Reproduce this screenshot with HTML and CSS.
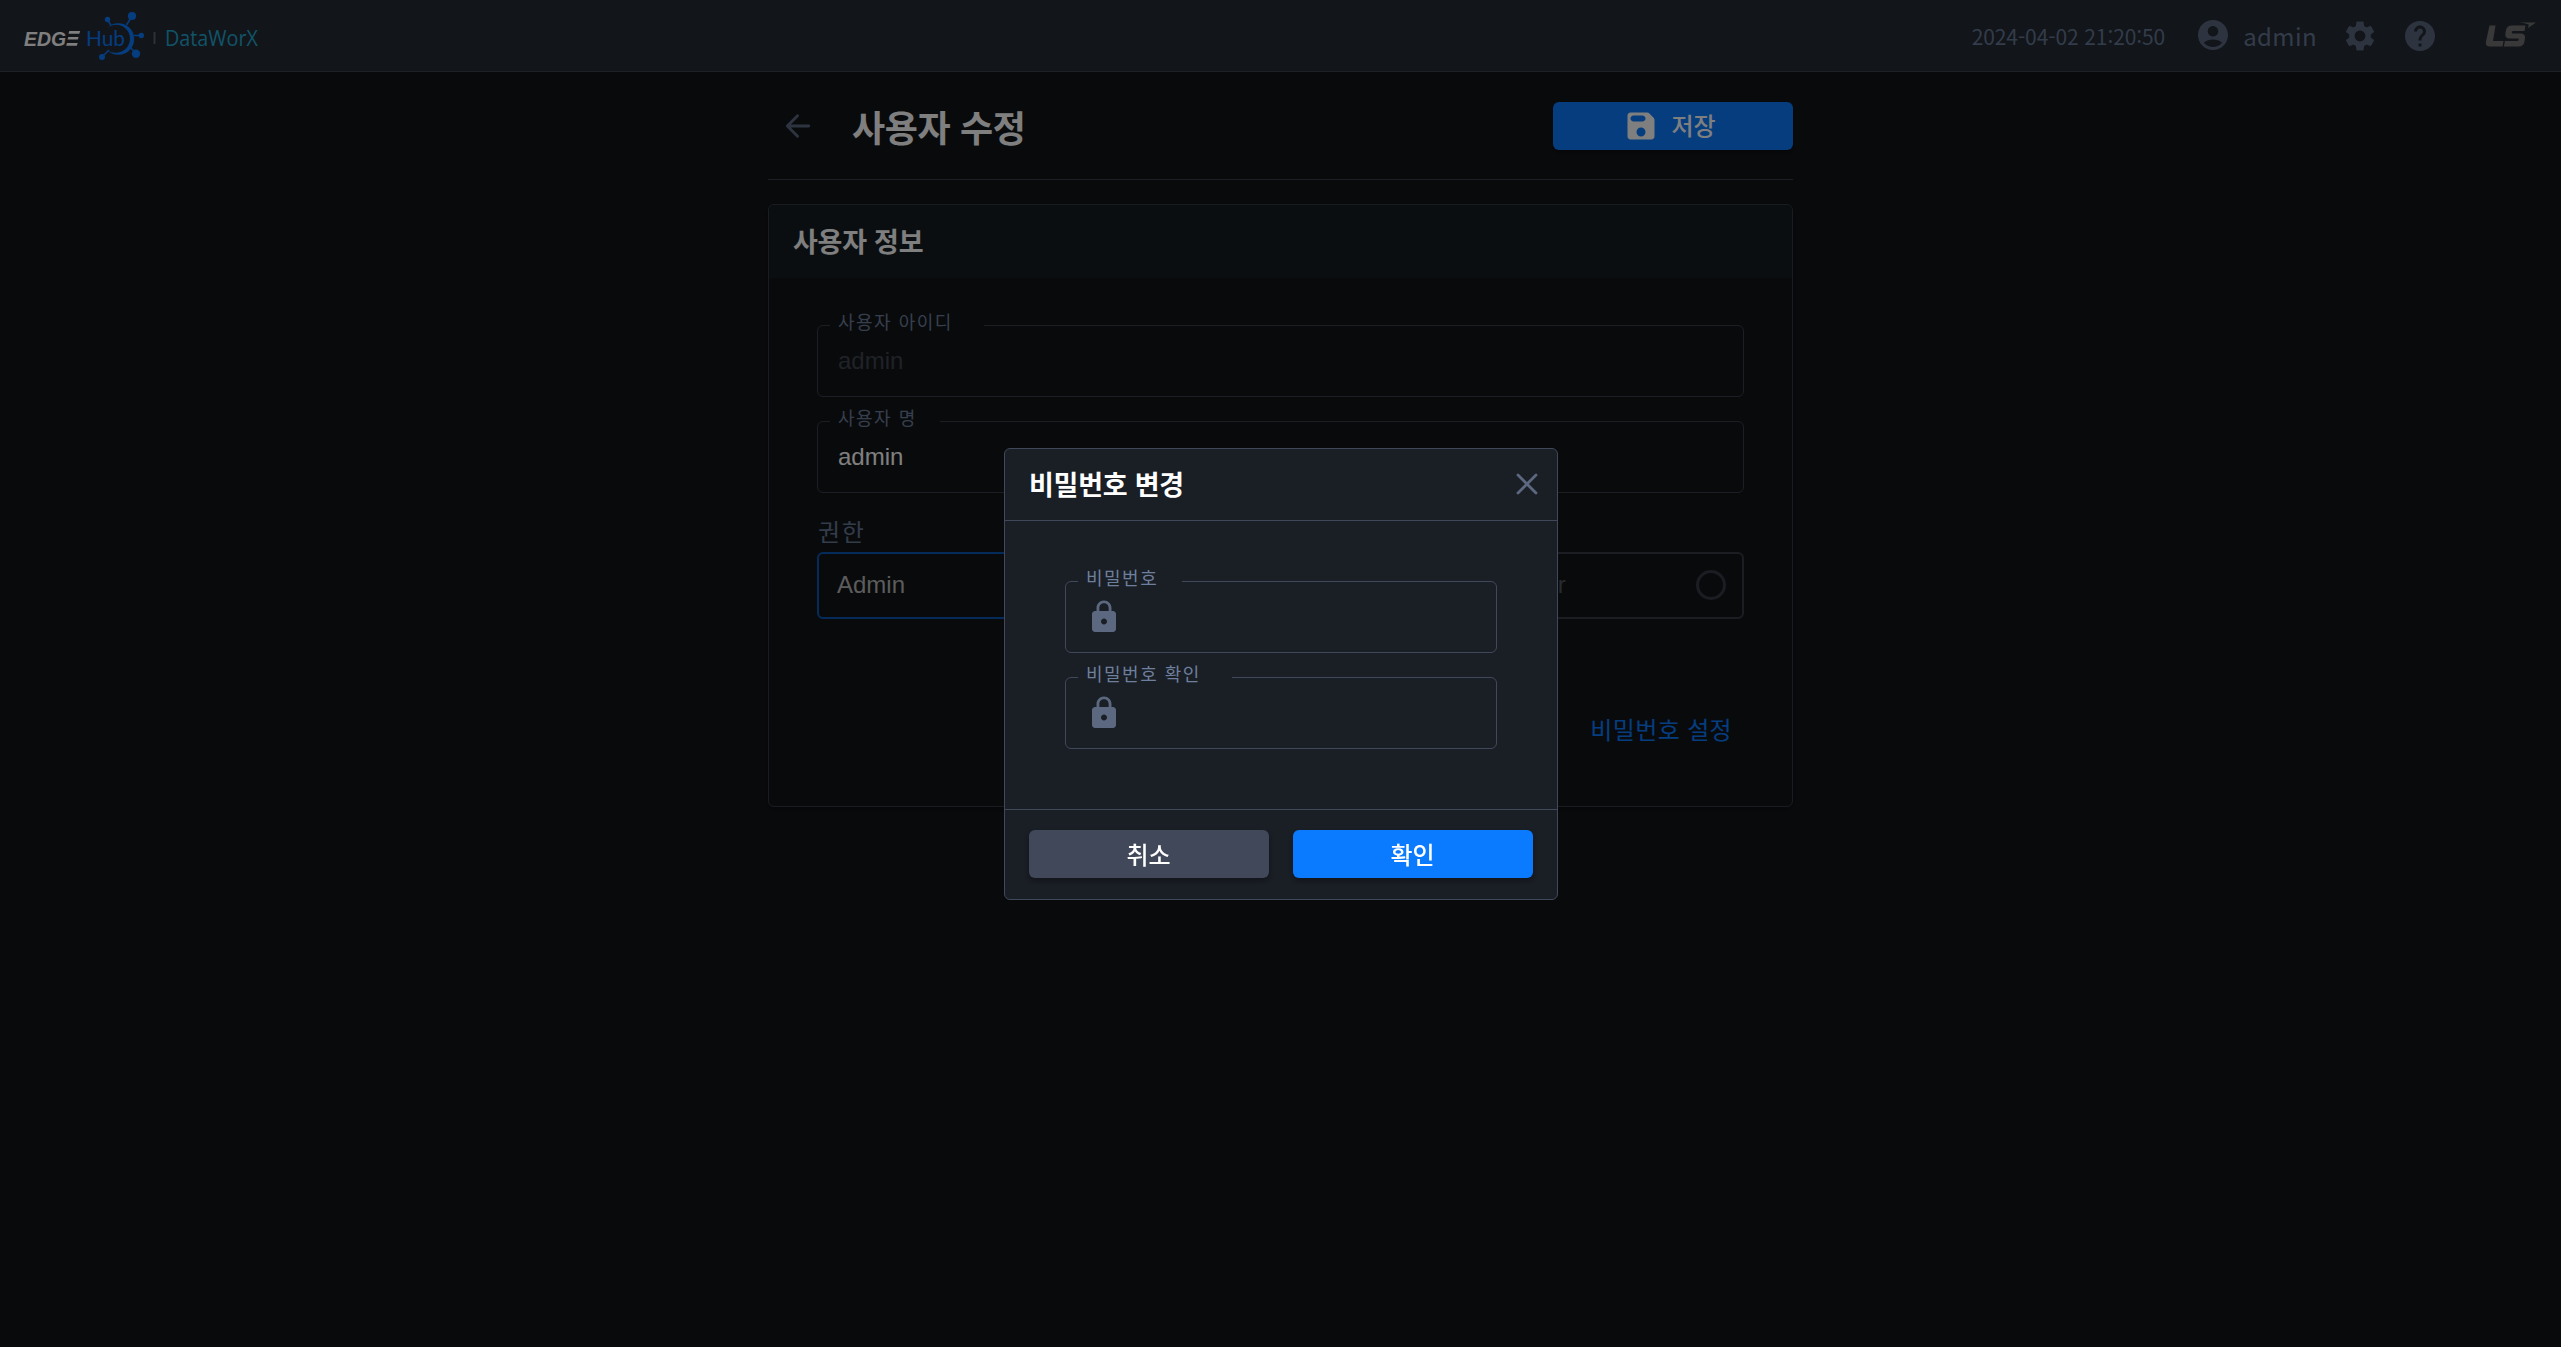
FILE: index.html
```html
<!DOCTYPE html>
<html lang="ko">
<head>
<meta charset="utf-8">
<title>EDGE Hub | DataWorX</title>
<link rel="stylesheet" href="styles.css">
</head>
<body>
<header class="topbar">
  <svg class="brand" width="264" height="71" viewBox="0 0 264 71">
    <g class="brand-edge"><text x="24" y="45.500" textLength="42" lengthAdjust="spacingAndGlyphs">EDG</text>
      <path d="M69.300 31h10.900l-.9 2.700H68.500zM68.300 36.900h10.300l-.8 2.600H67.500zM67 42.900h10.700l-.9 2.800H66.200z"/></g>
    <g class="brand-hub">
      <text x="86" y="45.700" textLength="39" lengthAdjust="spacingAndGlyphs">Hub</text>
      <path d="M107 28A15.800 15.800 0 1 1 107.500 50.500A14.800 14.800 0 0 0 118.500 52.500A14 14 0 1 0 107 28z"/>
      <path class="spoke" d="M107.500 19.500l3.500 6M132 16l-5.500 9M134 35.500h7M130 47l6 6.500M102 57l7-7"/>
      <circle cx="107.500" cy="19.500" r="2.700"/><circle cx="132" cy="16" r="4.100"/><circle cx="141.300" cy="35.500" r="2.700"/><circle cx="136" cy="53.700" r="4.200"/><circle cx="102" cy="57" r="3"/>
    </g>
    <path class="brand-bar" d="M154.500 32v12"/>
    <text class="brand-data" x="165" y="45.700" textLength="93" lengthAdjust="spacingAndGlyphs">DataWorX</text>
  </svg>
  <div class="tools">
    <time class="clock">2024-04-02 21:20:50</time>
    <svg class="icon user-icon" viewBox="0 0 24 24"><path d="M12 2C6.480 2 2 6.480 2 12s4.480 10 10 10 10-4.480 10-10S17.520 2 12 2zm0 4c1.930 0 3.500 1.570 3.500 3.500S13.930 13 12 13s-3.500-1.570-3.500-3.500S10.070 6 12 6zm0 14c-2.030 0-4.430-.82-6.140-2.880C7.550 15.800 9.680 15 12 15s4.450.8 6.140 2.120C16.430 19.180 14.030 20 12 20z"/></svg>
    <span class="account">admin</span>
    <svg class="icon gear-icon" viewBox="0 0 24 24"><path d="M19.140 12.940c.04-.3.060-.61.060-.94 0-.32-.02-.64-.07-.94l2.030-1.580c.18-.14.230-.41.120-.61l-1.920-3.320c-.12-.22-.37-.29-.59-.22l-2.390.96c-.5-.38-1.030-.7-1.620-.94l-.36-2.540c-.04-.24-.24-.41-.48-.41h-3.840c-.24 0-.43.170-.47.410l-.36 2.540c-.59.240-1.130.570-1.620.940l-2.390-.96c-.22-.08-.47 0-.59.220L2.740 8.870c-.12.210-.08.470.120.610l2.030 1.580c-.05.300-.09.630-.09.940s.02.640.07.940l-2.030 1.580c-.18.140-.23.410-.12.610l1.920 3.320c.12.220.37.290.59.220l2.390-.96c.5.380 1.030.7 1.620.940l.36 2.540c.05.240.24.410.48.410h3.840c.24 0 .44-.17.470-.41l.36-2.540c.59-.24 1.130-.56 1.620-.94l2.390.96c.22.080.47 0 .59-.22l1.920-3.320c.12-.22.070-.47-.12-.61l-2.010-1.580zM12 15.600c-1.980 0-3.600-1.620-3.600-3.600s1.620-3.600 3.600-3.600 3.600 1.620 3.600 3.600-1.620 3.600-3.600 3.600z"/></svg>
    <svg class="icon help-icon" viewBox="0 0 24 24"><path d="M12 2C6.480 2 2 6.480 2 12s4.480 10 10 10 10-4.480 10-10S17.520 2 12 2zm1 17h-2v-2h2v2zm2.070-7.750l-.9.920C13.450 12.900 13 13.500 13 15h-2v-.5c0-1.100.45-2.100 1.170-2.830l1.240-1.260c.37-.36.590-.86.590-1.410 0-1.100-.9-2-2-2s-2 .9-2 2H8c0-2.210 1.790-4 4-4s4 1.790 4 4c0 .880-.36 1.680-.93 2.250z"/></svg>
    <svg class="ls-logo" width="52" height="26" viewBox="0 0 52 26"><path d="M4.500 3.500h6L8 19h10.500L17.500 24.500H5Q.2 24.500.9 20zM27 3.500h13.500l-1 5.500H28.500q-1.500 0-1.700 1.200t1.200 1.300h7.500q5.200 0 4.500 4.800l-.6 3.400q-.8 4.800-5.800 4.800H18.800l1.200-5.500h12q1.600 0 1.800-1.200t-1.200-1.300h-8q-4.900 0-4.200-4.700l.6-3.500Q21.800 3.500 27 3.500zM34 .500h17L43 6l.8-3.600q-4-1.200-9.800-1.900z"/></svg>
  </div>
</header>

<main class="page">
  <div class="page-head">
    <svg class="icon back" viewBox="0 0 24 24"><path d="M19.200 12H5M11.700 5.100L4.900 12l6.800 6.900"/></svg>
    <h1>사용자 수정</h1>
    <button class="btn primary save">
      <svg class="icon" viewBox="0 0 24 24"><path d="M17.590 3.590c-.38-.38-.89-.59-1.420-.59H5c-1.110 0-2 .9-2 2v14c0 1.100.9 2 2 2h14c1.100 0 2-.9 2-2V7.830c0-.53-.21-1.040-.59-1.410l-2.820-2.830zM12 19c-1.660 0-3-1.340-3-3s1.340-3 3-3 3 1.340 3 3-1.340 3-3 3zm1-10H7c-1.100 0-2-.9-2-2s.9-2 2-2h6c1.100 0 2 .9 2 2s-.9 2-2 2z"/></svg>
      <span>저장</span>
    </button>
  </div>

  <section class="card">
    <h2>사용자 정보</h2>
    <div class="card-body">
      <fieldset class="field disabled"><legend class="w-long"><span>사용자 아이디</span></legend><div class="value">admin</div></fieldset>
      <fieldset class="field"><legend class="w-mid"><span>사용자 명</span></legend><div class="value">admin</div></fieldset>
      <div class="role-label">권한</div>
      <div class="roles">
        <div class="role selected"><span>Admin</span></div>
        <div class="role"></div>
        <div class="role"><span>Operator</span><i class="radio"></i></div>
      </div>
      <a class="pw-link">비밀번호 설정</a>
    </div>
  </section>
</main>

<div class="backdrop">
  <div class="modal" role="dialog">
    <div class="modal-head">
      <h3>비밀번호 변경</h3>
      <svg class="close" width="24" height="24" viewBox="0 0 24 24"><path d="M3 3l18 18M21 3L3 21"/></svg>
    </div>
    <div class="modal-body">
      <fieldset class="field"><legend class="w-short"><span>비밀번호</span></legend>
        <svg class="icon lock" viewBox="0 0 24 24"><path d="M18 8h-1V6c0-2.760-2.240-5-5-5S7 3.240 7 6v2H6c-1.100 0-2 .9-2 2v10c0 1.100.9 2 2 2h12c1.100 0 2-.9 2-2V10c0-1.100-.9-2-2-2zm-6 9c-1.100 0-2-.9-2-2s.9-2 2-2 2 .9 2 2-.9 2-2 2zM8.900 8V6c0-1.710 1.390-3.100 3.100-3.100s3.100 1.390 3.100 3.100v2H8.900z"/></svg></fieldset>
      <fieldset class="field"><legend class="w-long"><span>비밀번호 확인</span></legend>
        <svg class="icon lock" viewBox="0 0 24 24"><path d="M18 8h-1V6c0-2.760-2.240-5-5-5S7 3.240 7 6v2H6c-1.100 0-2 .9-2 2v10c0 1.100.9 2 2 2h12c1.100 0 2-.9 2-2V10c0-1.100-.9-2-2-2zm-6 9c-1.100 0-2-.9-2-2s.9-2 2-2 2 .9 2 2-.9 2-2 2zM8.900 8V6c0-1.710 1.390-3.100 3.100-3.100s3.100 1.390 3.100 3.100v2H8.900z"/></svg></fieldset>
    </div>
    <div class="modal-foot">
      <button class="btn secondary">취소</button>
      <button class="btn primary">확인</button>
    </div>
  </div>
</div>
</body>
</html>
```
FILE: styles.css
```css
* { box-sizing: border-box; }
html, body { height: 100%; }
body {
  margin: 0;
  overflow: hidden;
  background: #131518;
  color: #fff;
  font: 24px/36px "Noto Sans CJK KR", sans-serif;
}
h1, h2, h3 { margin: 0; font-weight: 700; }
.icon { width: 36px; height: 36px; flex: none; fill: currentColor; display: block; }

/* top bar */
.topbar {
  display: flex;
  justify-content: space-between;
  height: 72px;
  background: #252b33;
  border-bottom: 1px solid #41434f;
  color: #5b6880;
}
.brand { display: block; }
.brand-edge { fill: #fff; font: italic 700 20.5px "Liberation Sans", sans-serif; }
.brand-hub { fill: #0a7aff; font: 21px Lato, sans-serif; }
.spoke { stroke: #0a7aff; stroke-width: 1.5; fill: none; }
.brand-bar { stroke: #5b6270; stroke-width: 2; }
.brand-data { fill: #22a6cf; font: 21px "Open Sans", sans-serif; }
.tools { display: flex; align-items: center; padding-right: 24px; }
.clock { font-size: 21px; color: #667894; letter-spacing: -.1px; }
.user-icon { margin: 0 12px 0 30px; position: relative; top: -1px; }
.account { color: #667894; letter-spacing: .4px; }
.gear-icon { margin-left: 25px; }
.help-icon { margin-left: 24px; }
.ls-logo { margin-left: 47px; fill: #727272; position: relative; top: -1px; }

/* page */
.page { width: 1025px; margin: 0 auto; }
.page-head {
  display: flex;
  align-items: center;
  height: 108px;
  border-bottom: 1px solid #3a3e48;
}
.back { margin-left: 12px; color: #5b6880; fill: none; stroke: currentColor; stroke-width: 1.9; stroke-linecap: round; stroke-linejoin: round; }
.page-head h1 { margin-left: 36px; font-size: 36px; line-height: 54px; letter-spacing: -.35px; flex: 1; }
.btn {
  display: flex;
  align-items: center;
  justify-content: center;
  width: 240px;
  height: 48px;
  padding: 0;
  border: 0;
  border-radius: 6px;
  color: #fff;
  font: 500 24px/36px "Noto Sans CJK KR", sans-serif;
  box-shadow: 0 3px 5px rgba(0, 0, 0, .3);
}
.primary { background: #0a7aff; }
.secondary { background: #414859; }
.save { gap: 12px; padding-right: 7px; }
.save span { padding-bottom: 2px; }

.card {
  margin-top: 24px;
  height: 603px;
  border: 1px solid #353944;
  border-radius: 6px;
  box-shadow: 0 2px 5px rgba(0, 0, 0, .35);
}
.card h2 {
  height: 73px;
  padding: 0 24px;
  font-size: 27px;
  line-height: 71px;
  letter-spacing: -.25px;
  background: #161d22;
  border-radius: 5px 5px 0 0;
}
.card-body { display: flex; flex-direction: column; padding: 47px 48px 0; }

/* outlined field with a label set into its top border */
.field {
  display: block;
  min-width: 0;
  height: 72px;
  margin: 0 0 24px;
  padding: 0 20px;
  border: 1px solid #414859;
  border-radius: 6px;
}
.field legend { height: 1px; margin-left: -8px; padding: 0 0 0 8px; line-height: 1px; font-size: 18px; }
.field legend span { position: relative; top: -4px; letter-spacing: 1.5px; white-space: nowrap; color: #6d7f9c; }
.w-long { width: 154px; }
.w-mid { width: 110px; }
.w-short { width: 104px; }
.card .field { border-color: #3a3d49; }
.value { font: 24px/36px "Liberation Sans", sans-serif; padding-top: 17px; }
.disabled .value { color: #3f444f; }
.role-label { margin-top: -4px; line-height: 36px; color: #667894; letter-spacing: 1.6px; padding-left: 1px; }
.roles { display: grid; grid-template-columns: repeat(3, 1fr); gap: 24px; margin-top: 3px; }
.role {
  display: flex;
  align-items: center;
  justify-content: space-between;
  height: 67px;
  padding: 0 16px 1px 18px;
  border: 2px solid #383a46;
  border-radius: 6px;
  color: #50555f;
  font-family: "Liberation Sans", sans-serif;
}
.selected { border-color: #0a56b4; color: #b8b8b8; }
.radio { width: 30px; height: 30px; border: 3px solid #383a46; border-radius: 50%; }
.pw-link { align-self: flex-end; margin: 92px 12px 0 0; color: #0a7aff; letter-spacing: .35px; }

/* dialog */
.backdrop {
  position: fixed;
  inset: 0;
  display: flex;
  align-items: center;
  justify-content: center;
  padding: 1px 0 0 1px;
  background: rgba(0, 0, 0, .5);
}
.modal {
  width: 554px;
  height: 452px;
  display: flex;
  flex-direction: column;
  background: #1a1e25;
  border: 1px solid #414859;
  border-radius: 6px;
}
.modal-head {
  display: flex;
  flex: none;
  align-items: center;
  justify-content: space-between;
  height: 72px;
  padding: 0 18px 2px 24px;
  border-bottom: 1px solid #414859;
}
.modal-head h3 { font-size: 27px; line-height: 40px; letter-spacing: -.25px; }
.close { fill: none; stroke: #5b6880; stroke-width: 2.8; stroke-linecap: round; }
.modal-body { flex: 1; min-height: 0; padding: 60px; }
.lock { color: #5b6880; margin-top: 17px; }
.modal-foot {
  display: flex;
  flex: none;
  gap: 24px;
  height: 90px;
  padding: 20px 24px 0;
  border-top: 1px solid #414859;
}
.modal-foot .btn { padding: 0 1px 0 0; }
```
